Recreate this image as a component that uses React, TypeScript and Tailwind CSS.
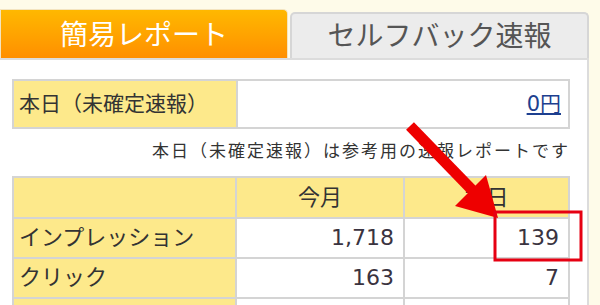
const font = { fontFamily: '"DejaVu Sans", "Noto Sans CJK JP", sans-serif' };

const rows = [
  { label: "インプレッション", month: "1,718", today: "139" },
  { label: "クリック", month: "163", today: "7" },
  { label: "", month: "", today: "" },
];

export default function App() {
  return (
    <div
      className="relative w-[600px] h-[305px] overflow-hidden bg-[#fefbe9] text-[#333]"
      style={font}
    >
      {/* tabs */}
      <div className="flex items-end h-[58px]">
        <div className="w-[288px] h-[49px] rounded-tr-[5px] border border-b-0 border-[#f3e4c0] bg-gradient-to-b from-[#ffb800] to-[#ff8f00] flex items-center justify-center text-white text-[28px] pt-[3px]">
          簡易レポート
        </div>
        <div className="ml-[2px] w-[299px] h-[46px] rounded-t-[5px] border-2 border-b-0 border-[#d6d6d6] bg-[#ececec] flex items-center justify-center text-[#555] text-[28px] pt-[2px]">
          セルフバック速報
        </div>
      </div>

      {/* panel */}
      <div className="w-[589px] h-[247px] bg-white border-t-2 border-r-2 border-[#dcdcdc] pl-[12px] pt-[19px]">
        <table className="w-[558px] border-collapse text-[21px]">
          <tbody>
            <tr className="h-[48px]">
              <td className="w-[224px] bg-[#fde98b] border-2 border-[#d4d4d4] pl-[5px] leading-none">本日（未確定速報）</td>
              <td className="bg-white border-2 border-[#d4d4d4] text-right pr-[7px] leading-none">
                <span className="text-[#1d3f8f] underline">0円</span>
              </td>
            </tr>
          </tbody>
        </table>

        <div className="w-[558px] text-right text-[17px] tracking-[2px] mt-[10px] h-[37px]">
          本日（未確定速報）は参考用の速報レポートです
        </div>

        <table className="w-[558px] border-collapse text-[22px]">
          <tbody>
            <tr className="h-[41px]">
              <td className="w-[223px] bg-[#fde98b] border-2 border-[#d4d4d4]"></td>
              <td className="w-[168px] bg-[#fde98b] border-2 border-[#d4d4d4] text-center leading-none">今月</td>
              <td className="bg-[#fde98b] border-2 border-[#d4d4d4] text-center leading-none">本日</td>
            </tr>
            {rows.map((r, i) => (
              <tr key={i} className="h-[40px]">
                <td className="bg-[#fde98b] border-2 border-[#d4d4d4] pl-[5px] leading-none">{r.label}</td>
                <td className="bg-white border-2 border-[#d4d4d4] text-right pr-[9px] leading-none text-[#3a3340]">{r.month}</td>
                <td className="bg-white border-2 border-[#d4d4d4] text-right pr-[9px] leading-none text-[#3a3340]">{r.today}</td>
              </tr>
            ))}
          </tbody>
        </table>
      </div>

      {/* annotation */}
      <svg className="absolute left-0 top-0 pointer-events-none" width="600" height="305">
        <line x1="410" y1="126" x2="476" y2="194" stroke="#ee0000" strokeWidth="11" />
        <polygon points="498,218 455,206 486,175" fill="#ee0000" />
        <rect x="495" y="212" width="86" height="48" fill="none" stroke="#e60012" strokeWidth="3" />
      </svg>
    </div>
  );
}
